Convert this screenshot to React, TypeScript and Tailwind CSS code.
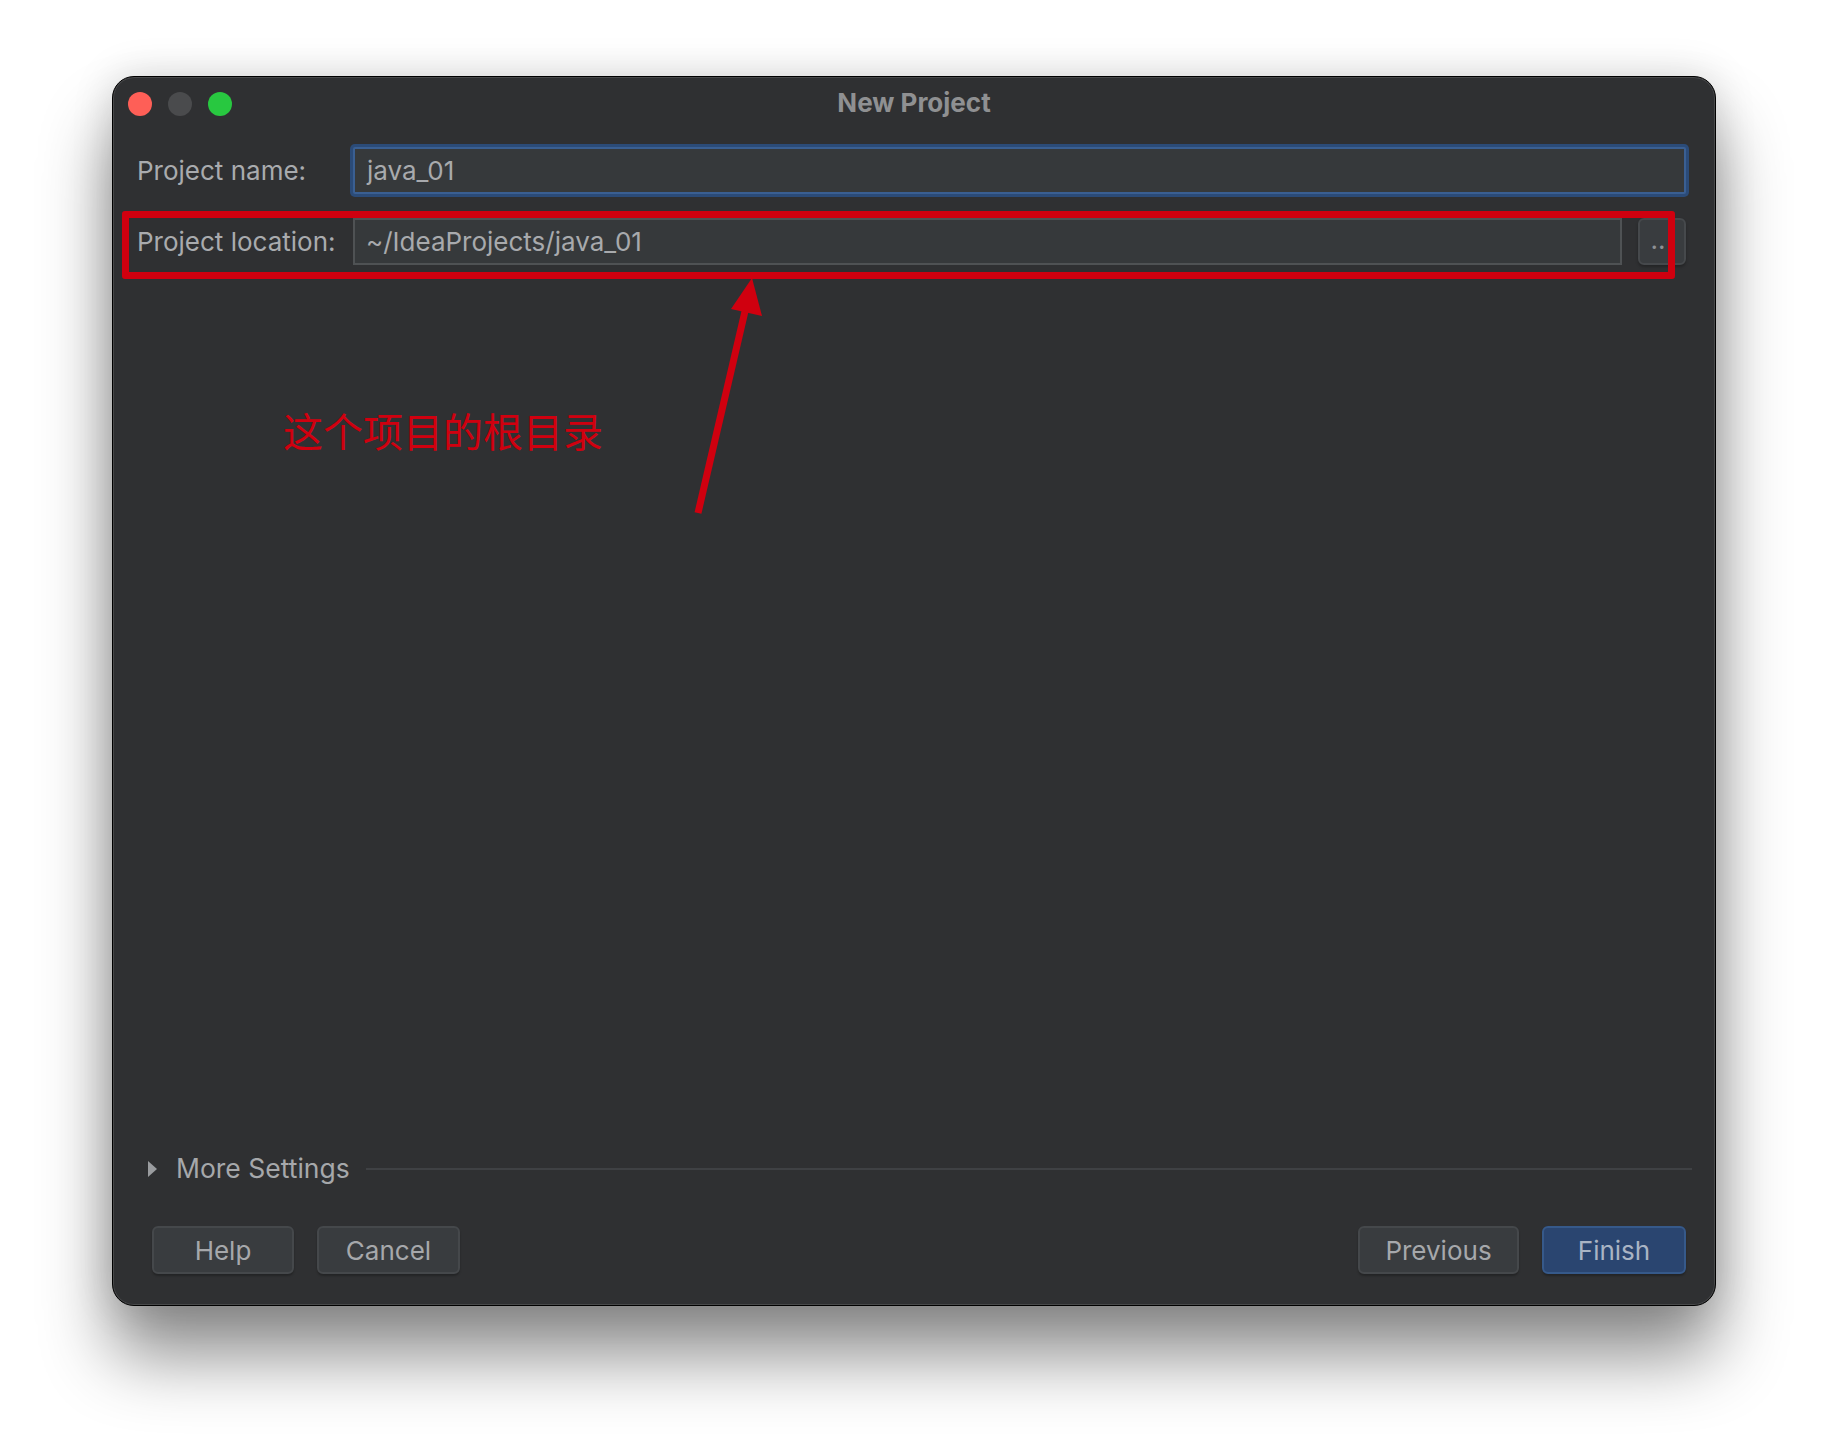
import React from "react";

const grayButton =
  "w-full h-[48px] rounded-[6px] border-2 border-[#45484b] bg-[#393c3f] text-[26px] text-[#a6a8ab] shadow-[0_2px_2px_rgba(0,0,0,0.25)]";

function DialogButton({ label, width, primary }: { label: string; width: string; primary?: boolean }) {
  return (
    <div className={width + " flex"}>
      <button
        className={
          primary
            ? "w-full h-[48px] rounded-[6px] border-2 border-[#36598a] bg-[#2a4570] text-[26px] text-[#a9b4c4] shadow-[0_2px_2px_rgba(0,0,0,0.25)]"
            : grayButton
        }
      >
        {label}
      </button>
    </div>
  );
}

export default function App() {
  return (
    <div className="w-[1828px] h-[1454px] bg-white pl-[112px] pt-[76px] font-['Inter','Liberation_Sans',sans-serif]">
      {/* Window */}
      <div className="relative w-[1604px] h-[1230px] rounded-[22px] border border-black bg-[#2f3032] flex flex-col shadow-[inset_0_0_0_1px_rgba(255,255,255,0.12),0_50px_70px_rgba(0,0,0,0.45),0_0_40px_rgba(0,0,0,0.15)]">
        {/* Title bar */}
        <div className="relative h-[54px] flex items-center pl-[15px]">
          <div className="flex gap-[16px]">
            <span className="w-[24px] h-[24px] rounded-full bg-[#fe5f57]" />
            <span className="w-[24px] h-[24px] rounded-full bg-[#4a4b4d]" />
            <span className="w-[24px] h-[24px] rounded-full bg-[#28c840]" />
          </div>
          <div className="absolute inset-0 flex items-center justify-center pb-[3px] text-[26px] font-bold text-[#8f9092]">
            New Project
          </div>
        </div>

        {/* Form */}
        <div className="mt-[16px] flex flex-col gap-[24px] pl-[24px] pr-[29px]">
          <div className="flex items-center h-[47px]">
            <div className="w-[216px] text-[26px] text-[#a9abae]">Project name:</div>
            <div className="flex-1 h-[47px] border-2 border-[#3a5f92] bg-[#36393b] shadow-[0_0_0_3px_#2b4b78] rounded-[2px] flex items-center pl-[12px] text-[26px] text-[#a8aaad]">
              java_01
            </div>
          </div>
          <div className="flex items-center h-[47px]">
            <div className="w-[216px] text-[26px] text-[#a9abae]">Project location:</div>
            <div className="flex-1 h-[47px] border-2 border-[#4f5254] bg-[#36393b] flex items-center pl-[11px] text-[26px] text-[#a8aaad]">
              ~/IdeaProjects/java_01
            </div>
            <button className="ml-[16px] w-[48px] h-[47px] rounded-[6px] border-2 border-[#46494c] bg-[#393c3f] text-[26px] leading-none text-[#8d9093] flex items-end justify-center pb-[10px] pr-[8px] shadow-[0_2px_3px_rgba(0,0,0,0.25)]">
              ..
            </button>
          </div>
        </div>

        <div className="flex-1" />

        {/* More settings */}
        <div className="flex items-center h-[30px] pl-[34px] pr-[23px]">
          <svg width="11" height="18" viewBox="0 0 11 18" className="mr-[18px]">
            <path d="M1 1 L10 9 L1 17 Z" fill="#9a9c9f" />
          </svg>
          <span className="text-[26.5px] text-[#a6a8ab]">More Settings</span>
          <div className="flex-1 ml-[16px] h-[2px] bg-[#3f4144]" />
        </div>

        {/* Buttons */}
        <div className="mt-[42px] mb-[31px] flex items-center pl-[39px] pr-[29px]">
          <div className="flex gap-[23px]">
            <DialogButton label="Help" width="w-[142px]" />
            <DialogButton label="Cancel" width="w-[143px]" />
          </div>
          <div className="flex-1" />
          <div className="flex gap-[23px]">
            <DialogButton label="Previous" width="w-[161px]" />
            <DialogButton label="Finish" width="w-[144px]" primary />
          </div>
        </div>

        {/* Annotation: red frame around location row */}
        <div className="absolute left-[9px] top-[134px] w-[1553px] h-[68px] border-[7px] border-[#d0000f] rounded-[3px]" />

        {/* Annotation: arrow */}
        <svg className="absolute left-0 top-0" width="1600" height="500" viewBox="0 0 1600 500">
          <line x1="585" y1="436" x2="633" y2="230" stroke="#d0000f" strokeWidth="7" />
          <path d="M639 201 L618 232 L649 239 Z" fill="#d0000f" />
        </svg>

        {/* Annotation: text */}
        <div className="absolute left-[170px] top-[333px] text-[40px] leading-none text-[#d0000f] font-['Noto_Sans_CJK_SC',sans-serif]">
          这个项目的根目录
        </div>
      </div>
    </div>
  );
}
